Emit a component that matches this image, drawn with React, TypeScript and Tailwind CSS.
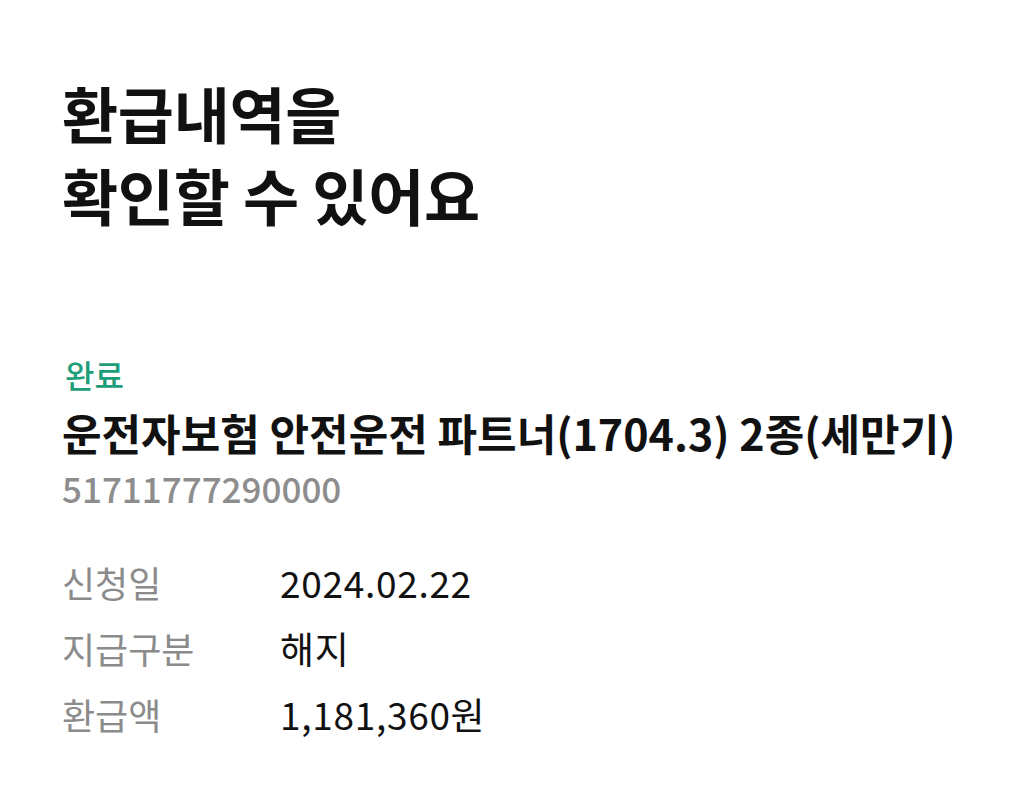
export default function App() {
	const rows = [
		{ label: '신청일', value: '2024.02.22' },
		{ label: '지급구분', value: '해지' },
		{ label: '환급액', value: '1,181,360원' },
	]

	return (
		<div
			className="min-h-[809px] w-full bg-white px-[62px] pt-[72px] text-[#111111]"
			style={{ fontFamily: '"Noto Sans CJK KR", "Noto Sans", sans-serif' }}
		>
			<h1 className="text-[61px] font-semibold leading-[82px] tracking-[-0.3px]">
				환급내역을
				<br />
				확인할 수 있어요
			</h1>

			<div className="mt-[118px]">
				<div className="pl-[3px] text-[32px] font-medium leading-[40px] text-[#1e9d79]">완료</div>
				<div className="mt-[14px] text-[43px] font-semibold leading-[48px]">
					운전자보험 안전운전 파트너(1704.3) 2종(세만기)
				</div>
				<div className="mt-[8px] text-[35px] font-medium leading-[48px] text-[#8d8d8d]">51711777290000</div>
			</div>

			<div className="mt-[46px] flex flex-col gap-[18px]">
				{rows.map((row) => (
					<div className="flex leading-[48px]" key={row.label}>
						<div className="w-[218px] text-[36px] text-[#8b8b8b]">{row.label}</div>
						<div className="text-[37px] tracking-[0.7px] text-[#111111]">{row.value}</div>
					</div>
				))}
			</div>
		</div>
	)
}
